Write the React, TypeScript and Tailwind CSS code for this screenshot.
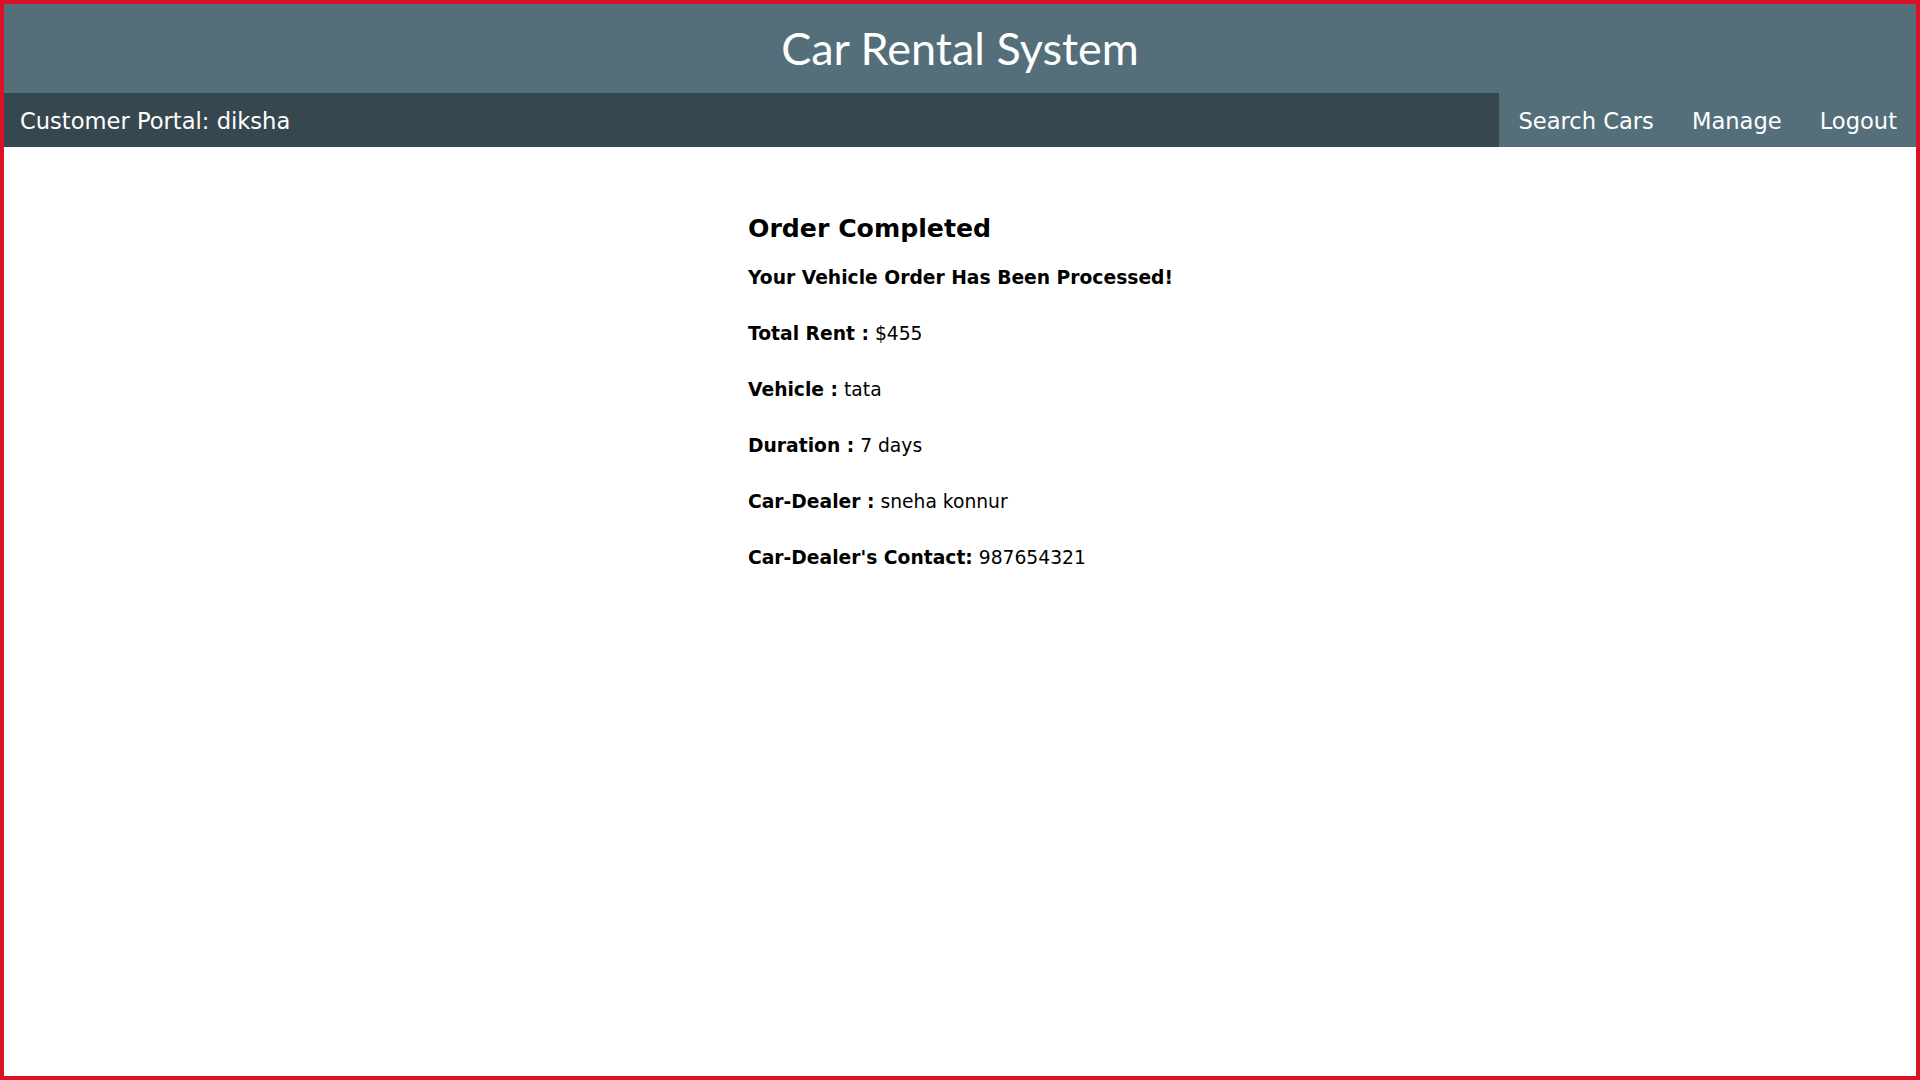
import React from 'react';

const ROWS:[string,string][]=[
  ['Total Rent :','$455'],
  ['Vehicle :','tata'],
  ['Duration :','7 days'],
  ['Car-Dealer :','sneha konnur'],
  ["Car-Dealer's Contact:",'987654321'],
];

export default function App(){
  return (
    <div className="w-[1920px] h-[1080px] border-4 border-[#d81324] bg-white flex flex-col overflow-hidden">
      <header className="h-[89px] bg-[#546e7a] flex items-center justify-center shrink-0">
        <h1 className="text-white text-[45px] font-normal font-['Lato',sans-serif] leading-none">Car Rental System</h1>
      </header>
      <nav className="h-[54px] bg-[#546e7a] flex shrink-0 font-['DejaVu_Sans',sans-serif] text-white text-[22.6px] leading-[28px]">
        <div className="flex-1 bg-[#37474f] flex items-center px-4 pt-[2px] whitespace-nowrap">Customer Portal: diksha</div>
        <div className="flex items-center pt-[2px]">
          {['Search Cars','Manage','Logout'].map(l=><a key={l} className="px-[19px] cursor-pointer whitespace-nowrap">{l}</a>)}
        </div>
      </nav>
      <main className="flex-1 font-['DejaVu_Sans',sans-serif] text-black">
        <div className="ml-[744px] pt-[67px] flex flex-col">
          <h2 className="text-[25.2px] font-bold leading-[30px]">Order Completed</h2>
          <h3 className="text-[18.72px] font-bold mt-[23px] leading-[22px]">Your Vehicle Order Has Been Processed!</h3>
          <div className="flex flex-col gap-[34px] mt-[34px]">
            {ROWS.map(([k,v])=>(
              <p key={k} className="text-[18.72px] leading-[22px]"><b>{k}</b> {v}</p>
            ))}
          </div>
        </div>
      </main>
    </div>
  );
}
